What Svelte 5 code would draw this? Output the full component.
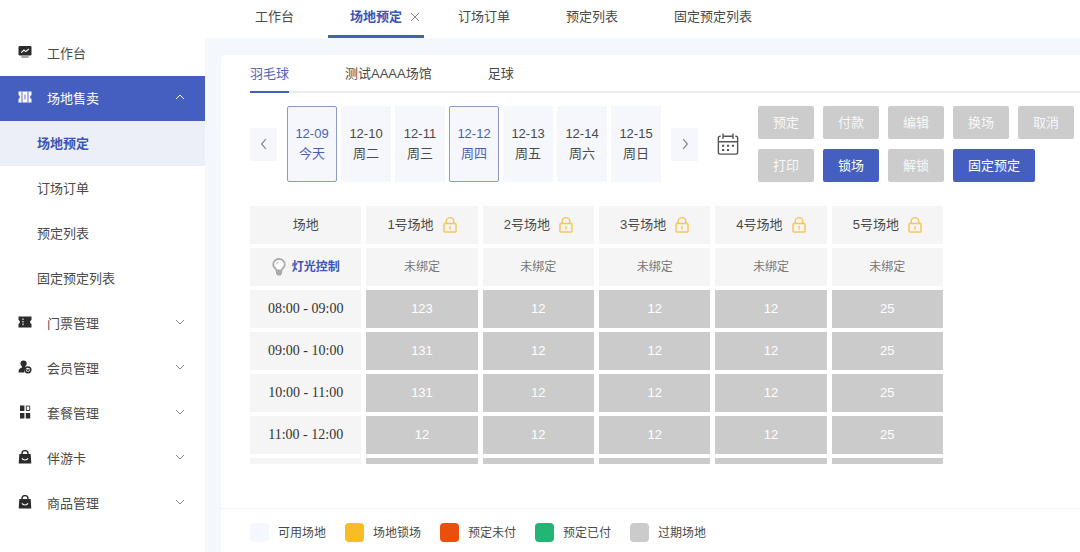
<script>
  const groupsBelow = [
    { label: '门票管理', icon: 'ticket' },
    { label: '会员管理', icon: 'member' },
    { label: '套餐管理', icon: 'grid' },
    { label: '伴游卡', icon: 'bag' },
    { label: '商品管理', icon: 'bag' }
  ];
  const saleItems = ['场地预定', '订场订单', '预定列表', '固定预定列表'];
  const openTabs = ['工作台', '场地预定', '订场订单', '预定列表', '固定预定列表'];
  const sports = ['羽毛球', '测试AAAA场馆', '足球'];
  const days = [
    { date: '12-09', name: '今天' },
    { date: '12-10', name: '周二' },
    { date: '12-11', name: '周三' },
    { date: '12-12', name: '周四' },
    { date: '12-13', name: '周五' },
    { date: '12-14', name: '周六' },
    { date: '12-15', name: '周日' }
  ];
  const actionRows = [
    [
      { label: '预定', on: false },
      { label: '付款', on: false },
      { label: '编辑', on: false },
      { label: '换场', on: false },
      { label: '取消', on: false }
    ],
    [
      { label: '打印', on: false },
      { label: '锁场', on: true },
      { label: '解锁', on: false },
      { label: '固定预定', on: true }
    ]
  ];
  const courts = ['1号场地', '2号场地', '3号场地', '4号场地', '5号场地'];
  const slots = [
    { time: '08:00 - 09:00', prices: [123, 12, 12, 12, 25] },
    { time: '09:00 - 10:00', prices: [131, 12, 12, 12, 25] },
    { time: '10:00 - 11:00', prices: [131, 12, 12, 12, 25] },
    { time: '11:00 - 12:00', prices: [12, 12, 12, 12, 25] },
    { time: '', prices: ['', '', '', '', ''] }
  ];
  const legend = [
    { label: '可用场地', kind: 'free' },
    { label: '场地锁场', kind: 'locked' },
    { label: '预定未付', kind: 'unpaid' },
    { label: '预定已付', kind: 'paid' },
    { label: '过期场地', kind: 'expired' }
  ];

  let picked = $state(['12-09', '12-12']);
  let sport = $state('羽毛球');

  function toggleDay(date) {
    picked = picked.includes(date) ? picked.filter((d) => d !== date) : [...picked, date];
  }
</script>

{#snippet menuIcon(name)}
  <svg class="menu-icon" viewBox="0 0 14 14" aria-hidden="true">
    {#if name === 'desk'}
      <rect x="0.5" y="1" width="13" height="9.6" rx="1.4" fill="currentColor" />
      <path d="M3.2 7.6 6 5l1.8 1.6L10.8 4" fill="none" stroke="#fff" stroke-width="1.1" />
      <path d="M3.4 12h7.2" stroke="currentColor" stroke-width="1.2" opacity=".7" />
    {:else if name === 'ticket'}
      <path d="M.5 1.500h13v3.600a2 2 0 0 0 0 3.800v3.600H.5V8.900a2 2 0 0 0 0-3.800z" fill="currentColor" />
      <path d="M5 3.400v7.200" stroke="#fff" stroke-width="1.100" stroke-dasharray="1.600 1" />
    {:else if name === 'pass'}
      <path d="M.5 1.500h13v3.600a2 2 0 0 0 0 3.800v3.600H.5V8.900a2 2 0 0 0 0-3.800z" fill="currentColor" />
      <path d="M4 1.500v11M10 1.500v11M7 4.500v5" stroke="#455fc0" stroke-width=".9" />
    {:else if name === 'member'}
      <circle cx="5.600" cy="3.600" r="3.100" fill="currentColor" />
      <path d="M4 6h3.200v2L6 12.600H.500c0-3 .9-4 3.500-5z" fill="currentColor" />
      <circle cx="9.900" cy="9.800" r="2.900" fill="#fff" stroke="currentColor" stroke-width="1.500" />
      <path d="m8.500 9 1.400 1.800L11.300 9" fill="none" stroke="currentColor" stroke-width="1.200" />
    {:else if name === 'grid'}
      <path d="M2 .500h4.400v5.500H2zM2 8h4.400v5.500H2zM7.800 8h4.400v5.500H7.800z" fill="currentColor" />
      <path d="M8.300 1h3.400v4.500H8.300z" fill="none" stroke="currentColor" stroke-width=".9" />
    {:else}
      <path d="M4 5V3.600a3 3 0 0 1 6 0V5" fill="none" stroke="currentColor" stroke-width="1.400" />
      <path d="M1.300 4h11.400l.6 9.500H.700z" fill="currentColor" />
      <path d="M4 8.300c1 2.300 5 2.300 6 0" fill="none" stroke="#fff" stroke-width="1.100" />
    {/if}
  </svg>
{/snippet}

{#snippet chevron(d)}
  <svg class="chevron" viewBox="0 0 10 10" aria-hidden="true">
    <path {d} fill="none" stroke="currentColor" stroke-width="1" />
  </svg>
{/snippet}

<div class="app">
  <nav class="sidebar">
    <a class="item" href="#desk">
      {@render menuIcon('desk')}
      <span>工作台</span>
    </a>
    <button class="item open" type="button" aria-expanded="true">
      {@render menuIcon('pass')}
      <span>场地售卖</span>
      {@render chevron('M1 7l4-4 4 4')}
    </button>
    {#each saleItems as label, i}
      <a class="item sub" class:current={i === 0} href="#sale-{i}"><span>{label}</span></a>
    {/each}
    {#each groupsBelow as group}
      <button class="item" type="button" aria-expanded="false">
        {@render menuIcon(group.icon)}
        <span>{group.label}</span>
        {@render chevron('M1 3l4 4 4-4')}
      </button>
    {/each}
  </nav>

  <div class="content">
    <header class="tabs">
      {#each openTabs as label}
        {#if label === '场地预定'}
          <div class="tab active">
            <button type="button">{label}</button>
            <button class="close" type="button" aria-label="关闭">
              <svg viewBox="0 0 10 10" aria-hidden="true">
                <path d="M1 1l8 8M9 1l-8 8" fill="none" stroke="currentColor" stroke-width="1" />
              </svg>
            </button>
          </div>
        {:else}
          <div class="tab"><button type="button">{label}</button></div>
        {/if}
      {/each}
    </header>

    <main class="card">
      <div class="sports">
        {#each sports as name}
          <button type="button" class:active={sport === name} onclick={() => (sport = name)}>{name}</button>
        {/each}
      </div>

      <div class="toolbar">
        <div class="days">
          <button class="step" type="button" aria-label="上一周">
            {@render chevron('M6.500 1L3 5l3.500 4')}
          </button>
          <div class="day-list">
            {#each days as day}
              <button
                class="day"
                class:picked={picked.includes(day.date)}
                type="button"
                onclick={() => toggleDay(day.date)}
              >
                <span>{day.date}</span>
                <span>{day.name}</span>
              </button>
            {/each}
          </div>
          <button class="step" type="button" aria-label="下一周">
            {@render chevron('M3.500 1L7 5 3.500 9')}
          </button>
        </div>
        <button class="calendar" type="button" aria-label="选择日期">
          <svg viewBox="0 0 24 24" fill="none" stroke="currentColor" stroke-width="1.500" aria-hidden="true">
            <path d="M4 3.500H3.500a2 2 0 0 0-2 2V21a2 2 0 0 0 2 2h17a2 2 0 0 0 2-2V5.500a2 2 0 0 0-2-2H20M9 3.500h6M1.500 9.500h21M6.500.500v6M17.500.500v6M9 3.500H7M17 3.500h-2" />
            <path d="M5.500 13.800h2.400M10.800 13.800h2.400M16.200 13.800h2.400M5.500 18.600h2.400M10.800 18.600h2.400" stroke-width="2.200" />
          </svg>
        </button>
        <div class="actions">
          {#each actionRows as row}
            <div class="action-row">
              {#each row as action}
                <button type="button" disabled={!action.on}>{action.label}</button>
              {/each}
            </div>
          {/each}
        </div>
      </div>

      <div class="schedule">
        <table>
          <thead>
            <tr>
              <th>场地</th>
              {#each courts as court}
                <th>
                  <span class="with-icon court">
                    {court}
                    <svg class="lock" viewBox="0 0 14 16" fill="none" stroke="currentColor" stroke-width="1.500" aria-hidden="true">
                      <rect x="1" y="6.500" width="12" height="8.500" rx=".8" />
                      <path d="M3.200 6.500V4.400a3.800 3.800 0 0 1 7.600 0v2.100M7 9v3.500" />
                    </svg>
                  </span>
                </th>
              {/each}
            </tr>
          </thead>
          <tbody>
            <tr class="lights">
              <th>
                <span class="with-icon">
                  <svg class="bulb" viewBox="0 0 14 18" aria-hidden="true">
                    <path d="M4.500 12.500C4.300 10.500 1.200 9.500 1.200 6.500a5.800 5.500 0 0 1 11.600 0c0 3-3.100 4-3.300 6z" fill="#fff" stroke="#aaa" stroke-width="1.800" />
                    <path d="M4 12.500h6v3L8.500 17.500h-3L4 15.500z" fill="#aaa" />
                    <path d="M4 6.500a3 3 0 0 1 2.500-2.500" fill="none" stroke="#bbb" />
                  </svg>
                  灯光控制
                </span>
              </th>
              {#each courts as _}
                <td>未绑定</td>
              {/each}
            </tr>
            {#each slots as slot}
              <tr class="slot">
                <th>{slot.time}</th>
                {#each slot.prices as price}
                  <td>{price}</td>
                {/each}
              </tr>
            {/each}
          </tbody>
        </table>
      </div>

      <footer class="legend">
        {#each legend as entry}
          <span class="entry"><i class={entry.kind}></i>{entry.label}</span>
        {/each}
      </footer>
    </main>
  </div>
</div>

<style>
  :global(body) {
    margin: 0;
    background: #fff;
  }
  .app {
    display: flex;
    height: 100vh;
    overflow: hidden;
    color: #4a4a4a;
    font: 13px/20px 'Liberation Sans', 'Noto Sans CJK SC', sans-serif;
  }
  button {
    padding: 0;
    border: 0;
    background: none;
    color: inherit;
    font: inherit;
    cursor: pointer;
  }
  svg {
    display: block;
    flex: none;
  }

  .sidebar {
    flex: 0 0 205px;
    box-sizing: border-box;
    padding-top: 31px;
    overflow: hidden;
  }
  .item {
    display: flex;
    align-items: center;
    box-sizing: border-box;
    width: 100%;
    height: 45px;
    padding: 1px 20px 0 18px;
    color: #4a4a4a;
    text-align: left;
    text-decoration: none;
  }
  .item span {
    flex: 1;
    margin-left: 15px;
  }
  .menu-icon {
    width: 14px;
    height: 14px;
    margin-bottom: 4px;
    color: #2b2b2b;
  }
  .chevron {
    width: 10px;
    height: 10px;
    color: #888;
  }
  .item .chevron {
    margin-bottom: 4px;
  }
  .open {
    background: #455fc0;
    color: #fff;
  }
  .open .menu-icon,
  .open .chevron {
    color: #fff;
  }
  .sub {
    padding-left: 22px;
  }
  .current {
    background: #eceef8;
    color: #3d56b4;
    font-weight: bold;
  }

  .content {
    flex: 1;
    min-width: 0;
    display: flex;
    flex-direction: column;
    background: #f4f7fc;
  }
  .tabs {
    display: flex;
    gap: 12px;
    height: 38px;
    padding-left: 28px;
    background: #fff;
  }
  .tab {
    display: flex;
    align-items: center;
    box-sizing: border-box;
    padding: 0 22px 2px;
    border-bottom: 3px solid transparent;
    white-space: nowrap;
  }
  .tab.active {
    gap: 8px;
    padding-right: 4px;
    border-color: #455fb4;
    color: #3d56b4;
    font-weight: bold;
  }
  .close {
    width: 10px;
    color: #888;
  }
  .close svg {
    width: 10px;
    height: 10px;
  }

  .card {
    flex: 1;
    min-height: 0;
    display: flex;
    flex-direction: column;
    margin: 17px 0 0 16px;
    border-radius: 4px 0 0 0;
    background: #fff;
  }
  .sports {
    display: flex;
    gap: 56px;
    height: 36px;
    margin-left: 29px;
    border-bottom: 2px solid #ececee;
  }
  .sports button {
    height: 38px;
    box-sizing: border-box;
    padding-top: 2px;
    border-bottom: 2px solid transparent;
  }
  .sports .active {
    border-color: #455fb4;
    color: #5065bb;
  }

  .toolbar {
    display: flex;
    align-items: center;
    margin: 13px 5px 0 29px;
  }
  .days {
    display: flex;
    align-items: center;
    gap: 10px;
  }
  .day-list {
    display: flex;
    gap: 4px;
  }
  .step {
    display: flex;
    align-items: center;
    justify-content: center;
    width: 27px;
    height: 33px;
    background: #f5f7fc;
  }
  .step .chevron {
    width: 12px;
    height: 12px;
  }
  .day {
    display: flex;
    flex-direction: column;
    align-items: center;
    justify-content: center;
    box-sizing: border-box;
    width: 50px;
    height: 76px;
    border: 1px solid #f5f7fd;
    background: #f5f7fd;
  }
  .day.picked {
    border-color: #8a9bc8;
    border-radius: 2px;
    color: #4a60b8;
  }
  .calendar {
    width: 22px;
    margin: 0 19px;
    color: #555;
  }
  .calendar svg {
    width: 22px;
    height: 24px;
  }
  .actions {
    display: grid;
    gap: 10px;
  }
  .action-row {
    display: flex;
    gap: 9px;
  }
  .action-row button {
    height: 33px;
    padding: 0 15px;
    border-radius: 2px;
    background: #455fc0;
    color: #fff;
    white-space: nowrap;
  }
  .action-row button:disabled {
    background: #ccc;
    color: #f8f8f8;
    cursor: default;
  }

  .schedule {
    flex: 1;
    min-height: 0;
    max-width: 703px;
    margin: 20px 24px 44px;
    overflow: auto;
    scrollbar-width: none;
  }
  table {
    width: 100%;
    table-layout: fixed;
    border-spacing: 5px 4px;
  }
  th,
  td {
    height: 38px;
    padding: 0;
    background: #f5f5f5;
    font-weight: normal;
    text-align: center;
  }
  .with-icon {
    display: flex;
    align-items: center;
    justify-content: center;
    gap: 6px;
  }
  .court {
    gap: 9px;
  }
  .lock {
    width: 14px;
    height: 16px;
    color: #f7c65a;
  }
  .bulb {
    width: 14px;
    height: 18px;
  }
  .lights td {
    color: #777;
    font-size: 12px;
  }
  .lights th {
    color: #3d56b4;
    font-size: 12px;
    font-weight: bold;
  }
  .slot th {
    color: #333;
    font-family: 'Liberation Serif', serif;
    font-size: 14px;
  }
  .slot td {
    background: #cbcbcb;
    color: #fff;
  }

  .legend {
    display: flex;
    align-items: center;
    gap: 19px;
    box-sizing: border-box;
    height: 44px;
    padding: 4px 0 0 29px;
    border-top: 1px solid #f3f3f5;
    font-size: 12px;
  }
  .entry {
    display: flex;
    align-items: center;
    gap: 9px;
  }
  .entry i {
    width: 19px;
    height: 19px;
    border-radius: 4px;
  }
  .free {
    background: #f4f7fd;
  }
  .locked {
    background: #fabc26;
  }
  .unpaid {
    background: #e8500c;
  }
  .paid {
    background: #22b573;
  }
  .expired {
    background: #cbcbcb;
  }
</style>
